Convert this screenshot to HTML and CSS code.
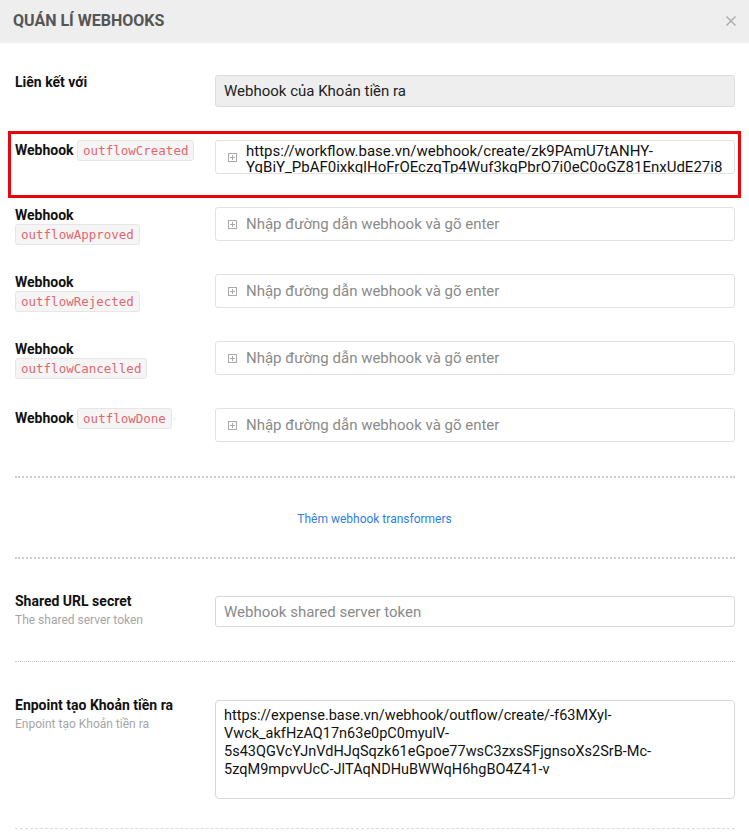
FILE: index.html
```html
<!DOCTYPE html>
<html lang="vi">
<head>
<meta charset="utf-8">
<title>Quán lí webhooks</title>
<link rel="stylesheet" href="styles.css">
</head>
<body>
<div class="modal">
  <div class="modal-header">
    <h2 class="title">QUÁN LÍ WEBHOOKS</h2>
    <span class="close" aria-label="Đóng">
      <svg width="10" height="10" viewBox="0 0 10 10"><path d="M0.5 0.5L9.5 9.5M9.5 0.5L0.5 9.5" stroke="#a9a9a9" stroke-width="1.4" fill="none"/></svg>
    </span>
  </div>
  <div class="modal-body">
    <div class="row">
      <div class="label label-short">Liên kết với</div>
      <div class="field"><div class="select-box">Webhook của Khoản tiền ra</div></div>
    </div>

    <div class="row row-hl">
      <div class="label">Webhook <code>outflowCreated</code></div>
      <div class="field">
        <div class="hook-input filled">
          <svg class="plus" width="9" height="9" viewBox="0 0 9 9"><rect x="0.5" y="0.5" width="8" height="8" fill="none" stroke="#aaa"/><path d="M2 4.5H7M4.5 2V7" stroke="#aaa" fill="none"/></svg>
          <div class="hook-text">https://workflow.base.vn/webhook/create/zk9PAmU7tANHY-<br>YqBiY_PbAF0ixkqlHoFrOEczqTp4Wuf3kqPbrO7i0eC0oGZ81EnxUdE27i8</div>
        </div>
      </div>
    </div>

    <div class="row">
      <div class="label">Webhook <code>outflowApproved</code></div>
      <div class="field">
        <div class="hook-input">
          <svg class="plus" width="9" height="9" viewBox="0 0 9 9"><rect x="0.5" y="0.5" width="8" height="8" fill="none" stroke="#aaa"/><path d="M2 4.5H7M4.5 2V7" stroke="#aaa" fill="none"/></svg>
          <span class="placeholder">Nhập đường dẫn webhook và gõ enter</span>
        </div>
      </div>
    </div>

    <div class="row">
      <div class="label">Webhook <code>outflowRejected</code></div>
      <div class="field">
        <div class="hook-input">
          <svg class="plus" width="9" height="9" viewBox="0 0 9 9"><rect x="0.5" y="0.5" width="8" height="8" fill="none" stroke="#aaa"/><path d="M2 4.5H7M4.5 2V7" stroke="#aaa" fill="none"/></svg>
          <span class="placeholder">Nhập đường dẫn webhook và gõ enter</span>
        </div>
      </div>
    </div>

    <div class="row">
      <div class="label">Webhook <code>outflowCancelled</code></div>
      <div class="field">
        <div class="hook-input">
          <svg class="plus" width="9" height="9" viewBox="0 0 9 9"><rect x="0.5" y="0.5" width="8" height="8" fill="none" stroke="#aaa"/><path d="M2 4.5H7M4.5 2V7" stroke="#aaa" fill="none"/></svg>
          <span class="placeholder">Nhập đường dẫn webhook và gõ enter</span>
        </div>
      </div>
    </div>

    <div class="row">
      <div class="label">Webhook <code>outflowDone</code></div>
      <div class="field">
        <div class="hook-input">
          <svg class="plus" width="9" height="9" viewBox="0 0 9 9"><rect x="0.5" y="0.5" width="8" height="8" fill="none" stroke="#aaa"/><path d="M2 4.5H7M4.5 2V7" stroke="#aaa" fill="none"/></svg>
          <span class="placeholder">Nhập đường dẫn webhook và gõ enter</span>
        </div>
      </div>
    </div>

    <hr class="sep sep-dotted sep-first">
    <div class="add-link"><a href="#">Thêm webhook transformers</a></div>
    <hr class="sep sep-dotted">

    <div class="row row-secret">
      <div class="label label-free">Shared URL secret<div class="sub">The shared server token</div></div>
      <div class="field"><div class="text-input"><span class="placeholder">Webhook shared server token</span></div></div>
    </div>

    <hr class="sep sep-thin">

    <div class="row row-endpoint">
      <div class="label label-free">Enpoint tạo Khoản tiền ra<div class="sub">Enpoint tạo Khoản tiền ra</div></div>
      <div class="field"><div class="textarea">https://expense.base.vn/webhook/outflow/create/-f63MXyl-<br>Vwck_akfHzAQ17n63e0pC0myulV-<br>5s43QGVcYJnVdHJqSqzk61eGpoe77wsC3zxsSFjgnsoXs2SrB-Mc-<br>5zqM9mpvvUcC-JlTAqNDHuBWWqH6hgBO4Z41-v</div></div>
    </div>

    <hr class="sep sep-dashed">
  </div>
</div>
</body>
</html>
```

FILE: styles.css
```css
* { box-sizing: border-box; }

body {
  margin: 0;
  font-family: Roboto, "Noto Sans", "Liberation Sans", sans-serif;
  color: #222;
  background: #fff;
}

.modal-header {
  height: 43px;
  background: #eeeeee;
  display: flex;
  align-items: center;
  justify-content: space-between;
  padding: 0 13px 3px 13px;
}

.title {
  margin: 0;
  font-size: 16px;
  font-weight: 700;
  color: #555;
  letter-spacing: 0;
}

.close {
  display: flex;
  margin-top: 2px;
}

.modal-body {
  padding: 23px 8px 0 8px;
}

.row {
  display: flex;
  align-items: flex-start;
  padding: 9px 6px 24px 7px;
}

.row-hl {
  border: 3px solid #e8060d;
  padding: 6px 3px 21px 4px;
}

.label {
  width: 182px;
  height: 34px;
  margin-right: 18px;
  flex-shrink: 0;
  font-size: 14px;
  font-weight: 700;
  line-height: 17px;
  color: #111;
}

.label-short {
  height: 32px;
  margin-top: -1px;
}

.label-free {
  height: auto;
}

.label code {
  display: inline-block;
  font-family: "DejaVu Sans Mono", "Liberation Mono", monospace;
  font-size: 12.5px;
  font-weight: 400;
  line-height: 15px;
  color: #e2666d;
  background: #f6f5f5;
  border: 1px solid #ebe4e4;
  border-radius: 3px;
  padding: 2px 5px;
}

.field {
  flex: 1;
  min-width: 0;
}

.select-box {
  height: 32px;
  background: #eeeeee;
  border: 1px solid #dcdcdc;
  border-radius: 3px;
  padding: 0 8px;
  font-size: 15px;
  line-height: 30px;
  color: #222;
}

.hook-input {
  height: 34px;
  border: 1px solid #e2e2e2;
  border-radius: 3px;
  display: flex;
  align-items: center;
  padding: 0 10px 0 12px;
  overflow: hidden;
}

.plus {
  flex-shrink: 0;
  margin-right: 9px;
}

.placeholder {
  font-size: 15px;
  color: #8a8a8a;
}

.hook-input.filled {
  align-items: flex-start;
}

.hook-input.filled .plus {
  margin-top: 12px;
}

.hook-text {
  font-size: 15px;
  line-height: 16px;
  color: #111;
  padding-top: 2px;
  overflow-wrap: anywhere;
}

.sep {
  border: none;
  height: 0;
  margin: 0 6px 0 7px;
}

.sep-dotted {
  border-top: 2px dotted #cccccc;
}

.sep-first {
  margin-top: 10px;
}

.sep-thin {
  border-top: 1px dotted #c8c8c8;
}

.sep-dashed {
  border-top: 1px dashed #dddddd;
}

.add-link {
  text-align: center;
  padding: 35px 0 31px;
  font-size: 12px;
  line-height: 13px;
}

.add-link a {
  color: #2f80e0;
  text-decoration: none;
}

.row-secret {
  padding: 37px 6px 33px 7px;
}

.row-secret .label,
.row-endpoint .label {
  margin-top: -3px;
}

.sub {
  font-size: 12px;
  font-weight: 400;
  color: #a6a6a6;
  line-height: 16px;
  margin-top: 2px;
}

.text-input {
  height: 31px;
  border: 1px solid #d8d8d8;
  border-radius: 3px;
  padding: 0 8px;
  line-height: 29px;
}

.row-endpoint {
  padding: 38px 6px 29px 7px;
}

.textarea {
  height: 99px;
  border: 1px solid #d8d8d8;
  border-radius: 4px;
  padding: 6px 8px;
  font-size: 14.5px;
  line-height: 18px;
  color: #111;
}
```
